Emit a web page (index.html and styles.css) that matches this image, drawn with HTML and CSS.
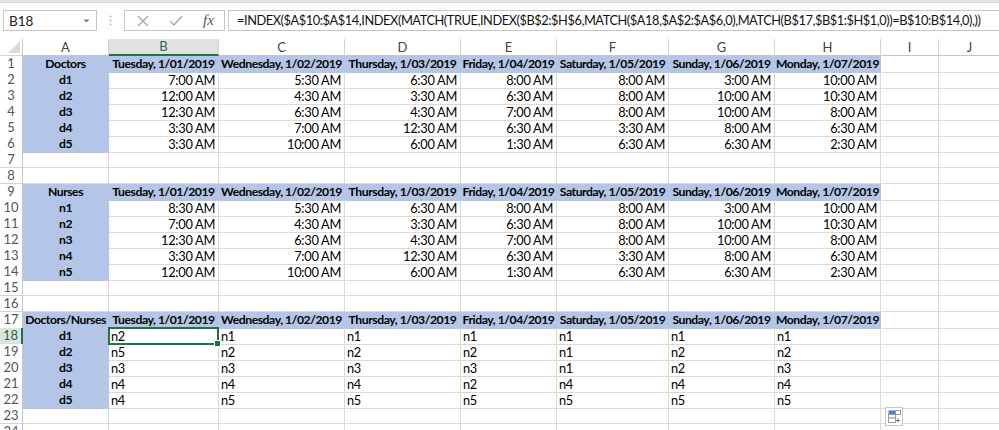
FILE: index.html
```html
<!DOCTYPE html>
<html>
<head>
<meta charset="utf-8">
<link rel="stylesheet" href="styles.css">
</head>
<body>
<div class="topband"></div>
<div class="fbar">
  <div class="namebox"><span>B18</span><svg class="dd" width="7" height="4" viewBox="0 0 7 4"><path d="M0.5 0.5 L3.5 3.5 L6.5 0.5 Z" fill="#7a7a7a"/></svg></div>
  <div class="grip"><svg width="3" height="11" viewBox="0 0 3 11"><circle cx="1.5" cy="1.5" r="1" fill="#b5b5b5"/><circle cx="1.5" cy="5.5" r="1" fill="#b5b5b5"/><circle cx="1.5" cy="9.5" r="1" fill="#b5b5b5"/></svg></div>
  <div class="icons">
    <svg class="ic" width="12" height="12" viewBox="0 0 12 12"><path d="M1 1 L11 11 M11 1 L1 11" stroke="#a6a6a6" stroke-width="1.3" fill="none"/></svg>
    <svg class="ic" width="14" height="11" viewBox="0 0 14 11"><path d="M1 6 L5 10 L13 1" stroke="#a6a6a6" stroke-width="1.3" fill="none"/></svg>
    <span class="fx">fx</span>
  </div>
  <div class="formula">=INDEX($A$10:$A$14,INDEX(MATCH(TRUE,INDEX($B$2:$H$6,MATCH($A18,$A$2:$A$6,0),MATCH(B$17,$B$1:$H$1,0))=B$10:B$14,0),))</div>
</div>

<div class="sheet">
  <div class="row hdr">
    <div class="corner"><svg width="12" height="12" viewBox="0 0 12 12"><path d="M12 0 L12 12 L0 12 Z" fill="#dadada"/></svg></div>
    <div class="ch">A</div><div class="ch selh">B</div><div class="ch">C</div><div class="ch">D</div><div class="ch">E</div><div class="ch">F</div><div class="ch">G</div><div class="ch">H</div><div class="ch">I</div><div class="ch">J</div>
  </div>

  <div class="row"><div class="rh">1</div><div class="c b lbl">Doctors</div><div class="c b hd">Tuesday, 1/01/2019</div><div class="c b hd">Wednesday, 1/02/2019</div><div class="c b hd">Thursday, 1/03/2019</div><div class="c b hd">Friday, 1/04/2019</div><div class="c b hd">Saturday, 1/05/2019</div><div class="c b hd">Sunday, 1/06/2019</div><div class="c b hd">Monday, 1/07/2019</div><div class="c"></div><div class="c"></div></div>
  <div class="row"><div class="rh">2</div><div class="c b lbl">d1</div><div class="c t">7:00 AM</div><div class="c t">5:30 AM</div><div class="c t">6:30 AM</div><div class="c t">8:00 AM</div><div class="c t">8:00 AM</div><div class="c t">3:00 AM</div><div class="c t">10:00 AM</div><div class="c"></div><div class="c"></div></div>
  <div class="row"><div class="rh">3</div><div class="c b lbl">d2</div><div class="c t">12:00 AM</div><div class="c t">4:30 AM</div><div class="c t">3:30 AM</div><div class="c t">6:30 AM</div><div class="c t">8:00 AM</div><div class="c t">10:00 AM</div><div class="c t">10:30 AM</div><div class="c"></div><div class="c"></div></div>
  <div class="row"><div class="rh">4</div><div class="c b lbl">d3</div><div class="c t">12:30 AM</div><div class="c t">6:30 AM</div><div class="c t">4:30 AM</div><div class="c t">7:00 AM</div><div class="c t">8:00 AM</div><div class="c t">10:00 AM</div><div class="c t">8:00 AM</div><div class="c"></div><div class="c"></div></div>
  <div class="row"><div class="rh">5</div><div class="c b lbl">d4</div><div class="c t">3:30 AM</div><div class="c t">7:00 AM</div><div class="c t">12:30 AM</div><div class="c t">6:30 AM</div><div class="c t">3:30 AM</div><div class="c t">8:00 AM</div><div class="c t">6:30 AM</div><div class="c"></div><div class="c"></div></div>
  <div class="row"><div class="rh">6</div><div class="c b lbl">d5</div><div class="c t">3:30 AM</div><div class="c t">10:00 AM</div><div class="c t">6:00 AM</div><div class="c t">1:30 AM</div><div class="c t">6:30 AM</div><div class="c t">6:30 AM</div><div class="c t">2:30 AM</div><div class="c"></div><div class="c"></div></div>
  <div class="row"><div class="rh">7</div><div class="c"></div><div class="c"></div><div class="c"></div><div class="c"></div><div class="c"></div><div class="c"></div><div class="c"></div><div class="c"></div><div class="c"></div><div class="c"></div></div>
  <div class="row"><div class="rh">8</div><div class="c"></div><div class="c"></div><div class="c"></div><div class="c"></div><div class="c"></div><div class="c"></div><div class="c"></div><div class="c"></div><div class="c"></div><div class="c"></div></div>

  <div class="row"><div class="rh">9</div><div class="c b lbl">Nurses</div><div class="c b hd">Tuesday, 1/01/2019</div><div class="c b hd">Wednesday, 1/02/2019</div><div class="c b hd">Thursday, 1/03/2019</div><div class="c b hd">Friday, 1/04/2019</div><div class="c b hd">Saturday, 1/05/2019</div><div class="c b hd">Sunday, 1/06/2019</div><div class="c b hd">Monday, 1/07/2019</div><div class="c"></div><div class="c"></div></div>
  <div class="row"><div class="rh">10</div><div class="c b lbl">n1</div><div class="c t">8:30 AM</div><div class="c t">5:30 AM</div><div class="c t">6:30 AM</div><div class="c t">8:00 AM</div><div class="c t">8:00 AM</div><div class="c t">3:00 AM</div><div class="c t">10:00 AM</div><div class="c"></div><div class="c"></div></div>
  <div class="row"><div class="rh">11</div><div class="c b lbl">n2</div><div class="c t">7:00 AM</div><div class="c t">4:30 AM</div><div class="c t">3:30 AM</div><div class="c t">6:30 AM</div><div class="c t">8:00 AM</div><div class="c t">10:00 AM</div><div class="c t">10:30 AM</div><div class="c"></div><div class="c"></div></div>
  <div class="row"><div class="rh">12</div><div class="c b lbl">n3</div><div class="c t">12:30 AM</div><div class="c t">6:30 AM</div><div class="c t">4:30 AM</div><div class="c t">7:00 AM</div><div class="c t">8:00 AM</div><div class="c t">10:00 AM</div><div class="c t">8:00 AM</div><div class="c"></div><div class="c"></div></div>
  <div class="row"><div class="rh">13</div><div class="c b lbl">n4</div><div class="c t">3:30 AM</div><div class="c t">7:00 AM</div><div class="c t">12:30 AM</div><div class="c t">6:30 AM</div><div class="c t">3:30 AM</div><div class="c t">8:00 AM</div><div class="c t">6:30 AM</div><div class="c"></div><div class="c"></div></div>
  <div class="row"><div class="rh">14</div><div class="c b lbl">n5</div><div class="c t">12:00 AM</div><div class="c t">10:00 AM</div><div class="c t">6:00 AM</div><div class="c t">1:30 AM</div><div class="c t">6:30 AM</div><div class="c t">6:30 AM</div><div class="c t">2:30 AM</div><div class="c"></div><div class="c"></div></div>
  <div class="row"><div class="rh">15</div><div class="c"></div><div class="c"></div><div class="c"></div><div class="c"></div><div class="c"></div><div class="c"></div><div class="c"></div><div class="c"></div><div class="c"></div><div class="c"></div></div>
  <div class="row"><div class="rh">16</div><div class="c"></div><div class="c"></div><div class="c"></div><div class="c"></div><div class="c"></div><div class="c"></div><div class="c"></div><div class="c"></div><div class="c"></div><div class="c"></div></div>

  <div class="row"><div class="rh">17</div><div class="c b lbl">Doctors/Nurses</div><div class="c b hd">Tuesday, 1/01/2019</div><div class="c b hd">Wednesday, 1/02/2019</div><div class="c b hd">Thursday, 1/03/2019</div><div class="c b hd">Friday, 1/04/2019</div><div class="c b hd">Saturday, 1/05/2019</div><div class="c b hd">Sunday, 1/06/2019</div><div class="c b hd">Monday, 1/07/2019</div><div class="c"></div><div class="c"></div></div>
  <div class="row"><div class="rh selr">18</div><div class="c b lbl">d1</div><div class="c n sel">n2</div><div class="c n">n1</div><div class="c n">n1</div><div class="c n">n1</div><div class="c n">n1</div><div class="c n">n1</div><div class="c n">n1</div><div class="c"></div><div class="c"></div></div>
  <div class="row"><div class="rh">19</div><div class="c b lbl">d2</div><div class="c n">n5</div><div class="c n">n2</div><div class="c n">n2</div><div class="c n">n2</div><div class="c n">n1</div><div class="c n">n2</div><div class="c n">n2</div><div class="c"></div><div class="c"></div></div>
  <div class="row"><div class="rh">20</div><div class="c b lbl">d3</div><div class="c n">n3</div><div class="c n">n3</div><div class="c n">n3</div><div class="c n">n3</div><div class="c n">n1</div><div class="c n">n2</div><div class="c n">n3</div><div class="c"></div><div class="c"></div></div>
  <div class="row"><div class="rh">21</div><div class="c b lbl">d4</div><div class="c n">n4</div><div class="c n">n4</div><div class="c n">n4</div><div class="c n">n2</div><div class="c n">n4</div><div class="c n">n4</div><div class="c n">n4</div><div class="c"></div><div class="c"></div></div>
  <div class="row"><div class="rh">22</div><div class="c b lbl">d5</div><div class="c n">n4</div><div class="c n">n5</div><div class="c n">n5</div><div class="c n">n5</div><div class="c n">n5</div><div class="c n">n5</div><div class="c n">n5</div><div class="c"></div><div class="c"></div></div>
  <div class="row"><div class="rh">23</div><div class="c"></div><div class="c"></div><div class="c"></div><div class="c"></div><div class="c"></div><div class="c"></div><div class="c"></div><div class="c"></div><div class="c"></div><div class="c"></div></div>
  <div class="row"><div class="rh">24</div><div class="c"></div><div class="c"></div><div class="c"></div><div class="c"></div><div class="c"></div><div class="c"></div><div class="c"></div><div class="c"></div><div class="c"></div><div class="c"></div></div>

  <div class="qa"><svg width="13" height="13" viewBox="0 0 13 13"><rect x="0.5" y="0.5" width="7" height="4" fill="#3d7ef0"/><rect x="7.5" y="0.5" width="5" height="4" fill="#fff" stroke="#9a9a9a"/><rect x="0.5" y="4.5" width="7" height="3.5" fill="#fff" stroke="#9a9a9a"/><rect x="0.5" y="8" width="7" height="4.5" fill="#fff" stroke="#9a9a9a"/><path d="M10 8.5 V12.5 M8 10.5 H12" stroke="#777" stroke-width="1"/></svg></div>
</div>
</body>
</html>
```
FILE: styles.css
```css
* { box-sizing: border-box; }
body {
  margin: 0;
  width: 999px;
  height: 430px;
  overflow: hidden;
  background: #fff;
  font-family: Lato, "Liberation Sans", sans-serif;
  color: #000;
}
.topband {
  height: 3px;
  background: #e6e6e6;
  border-bottom: 1px solid #d9d9d9;
}
.fbar {
  display: flex;
  align-items: stretch;
  height: 21px;
  margin-top: 7px;
  padding-left: 3px;
}
.namebox {
  width: 94px;
  border: 1px solid #c6c6c6;
  display: flex;
  align-items: center;
  justify-content: space-between;
  padding: 0 6px 0 5px;
  font-size: 13.5px;
  color: #222;
}
.grip {
  width: 27px;
  display: flex;
  align-items: center;
  justify-content: center;
}
.icons {
  width: 101px;
  border: 1px solid #c6c6c6;
  display: flex;
  align-items: center;
  padding-left: 12px;
}
.icons .ic:first-child { margin-right: 20px; }
.icons .ic:nth-child(2) { margin-right: 20px; }
.fx {
  font-family: "Liberation Serif", serif;
  font-style: italic;
  font-size: 15px;
  color: #555;
}
.formula {
  flex: 1;
  margin-left: 3px;
  border: 1px solid #c6c6c6;
  border-right: none;
  padding-left: 8px;
  font-size: 12.8px;
  letter-spacing: -0.43px;
  line-height: 19px;
  white-space: nowrap;
  overflow: hidden;
  color: #111;
}
.sheet {
  margin-top: 8px;
  position: relative;
}
.row {
  display: grid;
  grid-template-columns: 23px 86px 110px 126px 116px 96px 112px 106px 106px 58px 62px;
  height: 16px;
}
.row.hdr { height: 17px; }
.corner, .ch, .rh {
  background: #fff;
  border-right: 1px solid #d4d4d4;
  border-bottom: 1px solid #d4d4d4;
  color: #444;
  font-size: 13px;
  text-align: center;
}
.corner {
  display: flex;
  align-items: flex-end;
  justify-content: flex-end;
  padding: 0 2px 2px 0;
  border-right-color: #c6c6c6;
}
.ch { line-height: 16px; border-bottom-color: #c6c6c6; }
.selh {
  background: #e1e1e1;
  color: #1e6b41;
  border-bottom: 2px solid #217346;
  line-height: 15px;
}
.rh {
  line-height: 15px;
  border-right-color: #c6c6c6;
  color: #555;
}
.selr {
  background: #e1e1e1;
  color: #1e6b41;
  border-right: 2px solid #217346;
}
.c {
  border-right: 1px solid #dadada;
  border-bottom: 1px solid #dadada;
  font-size: 12.8px;
  letter-spacing: -0.3px;
  line-height: 16px;
  white-space: nowrap;
}
.b {
  background: #b4c6e7;
  border-color: #b4c6e7;
}
.lbl, .hd {
  font-weight: bold;
  text-align: center;
  font-size: 12.2px;
  letter-spacing: -0.45px;
}
.t {
  text-align: right;
  padding-right: 3px;
}
.n {
  padding-left: 2px;
}
.sel { position: relative; }
.sel::after {
  content: "";
  position: absolute;
  left: -1px;
  top: -1px;
  right: -1px;
  bottom: -1px;
  border: 2px solid #217346;
}
.sel::before {
  content: "";
  position: absolute;
  right: -3px;
  bottom: -3px;
  width: 5px;
  height: 5px;
  background: #217346;
  border: 1px solid #fff;
  z-index: 2;
}
.qa {
  position: absolute;
  left: 885px;
  top: 368px;
  width: 18px;
  height: 19px;
  border: 1px solid #c6c6c6;
  background: #fff;
  display: flex;
  align-items: center;
  justify-content: center;
}
```
